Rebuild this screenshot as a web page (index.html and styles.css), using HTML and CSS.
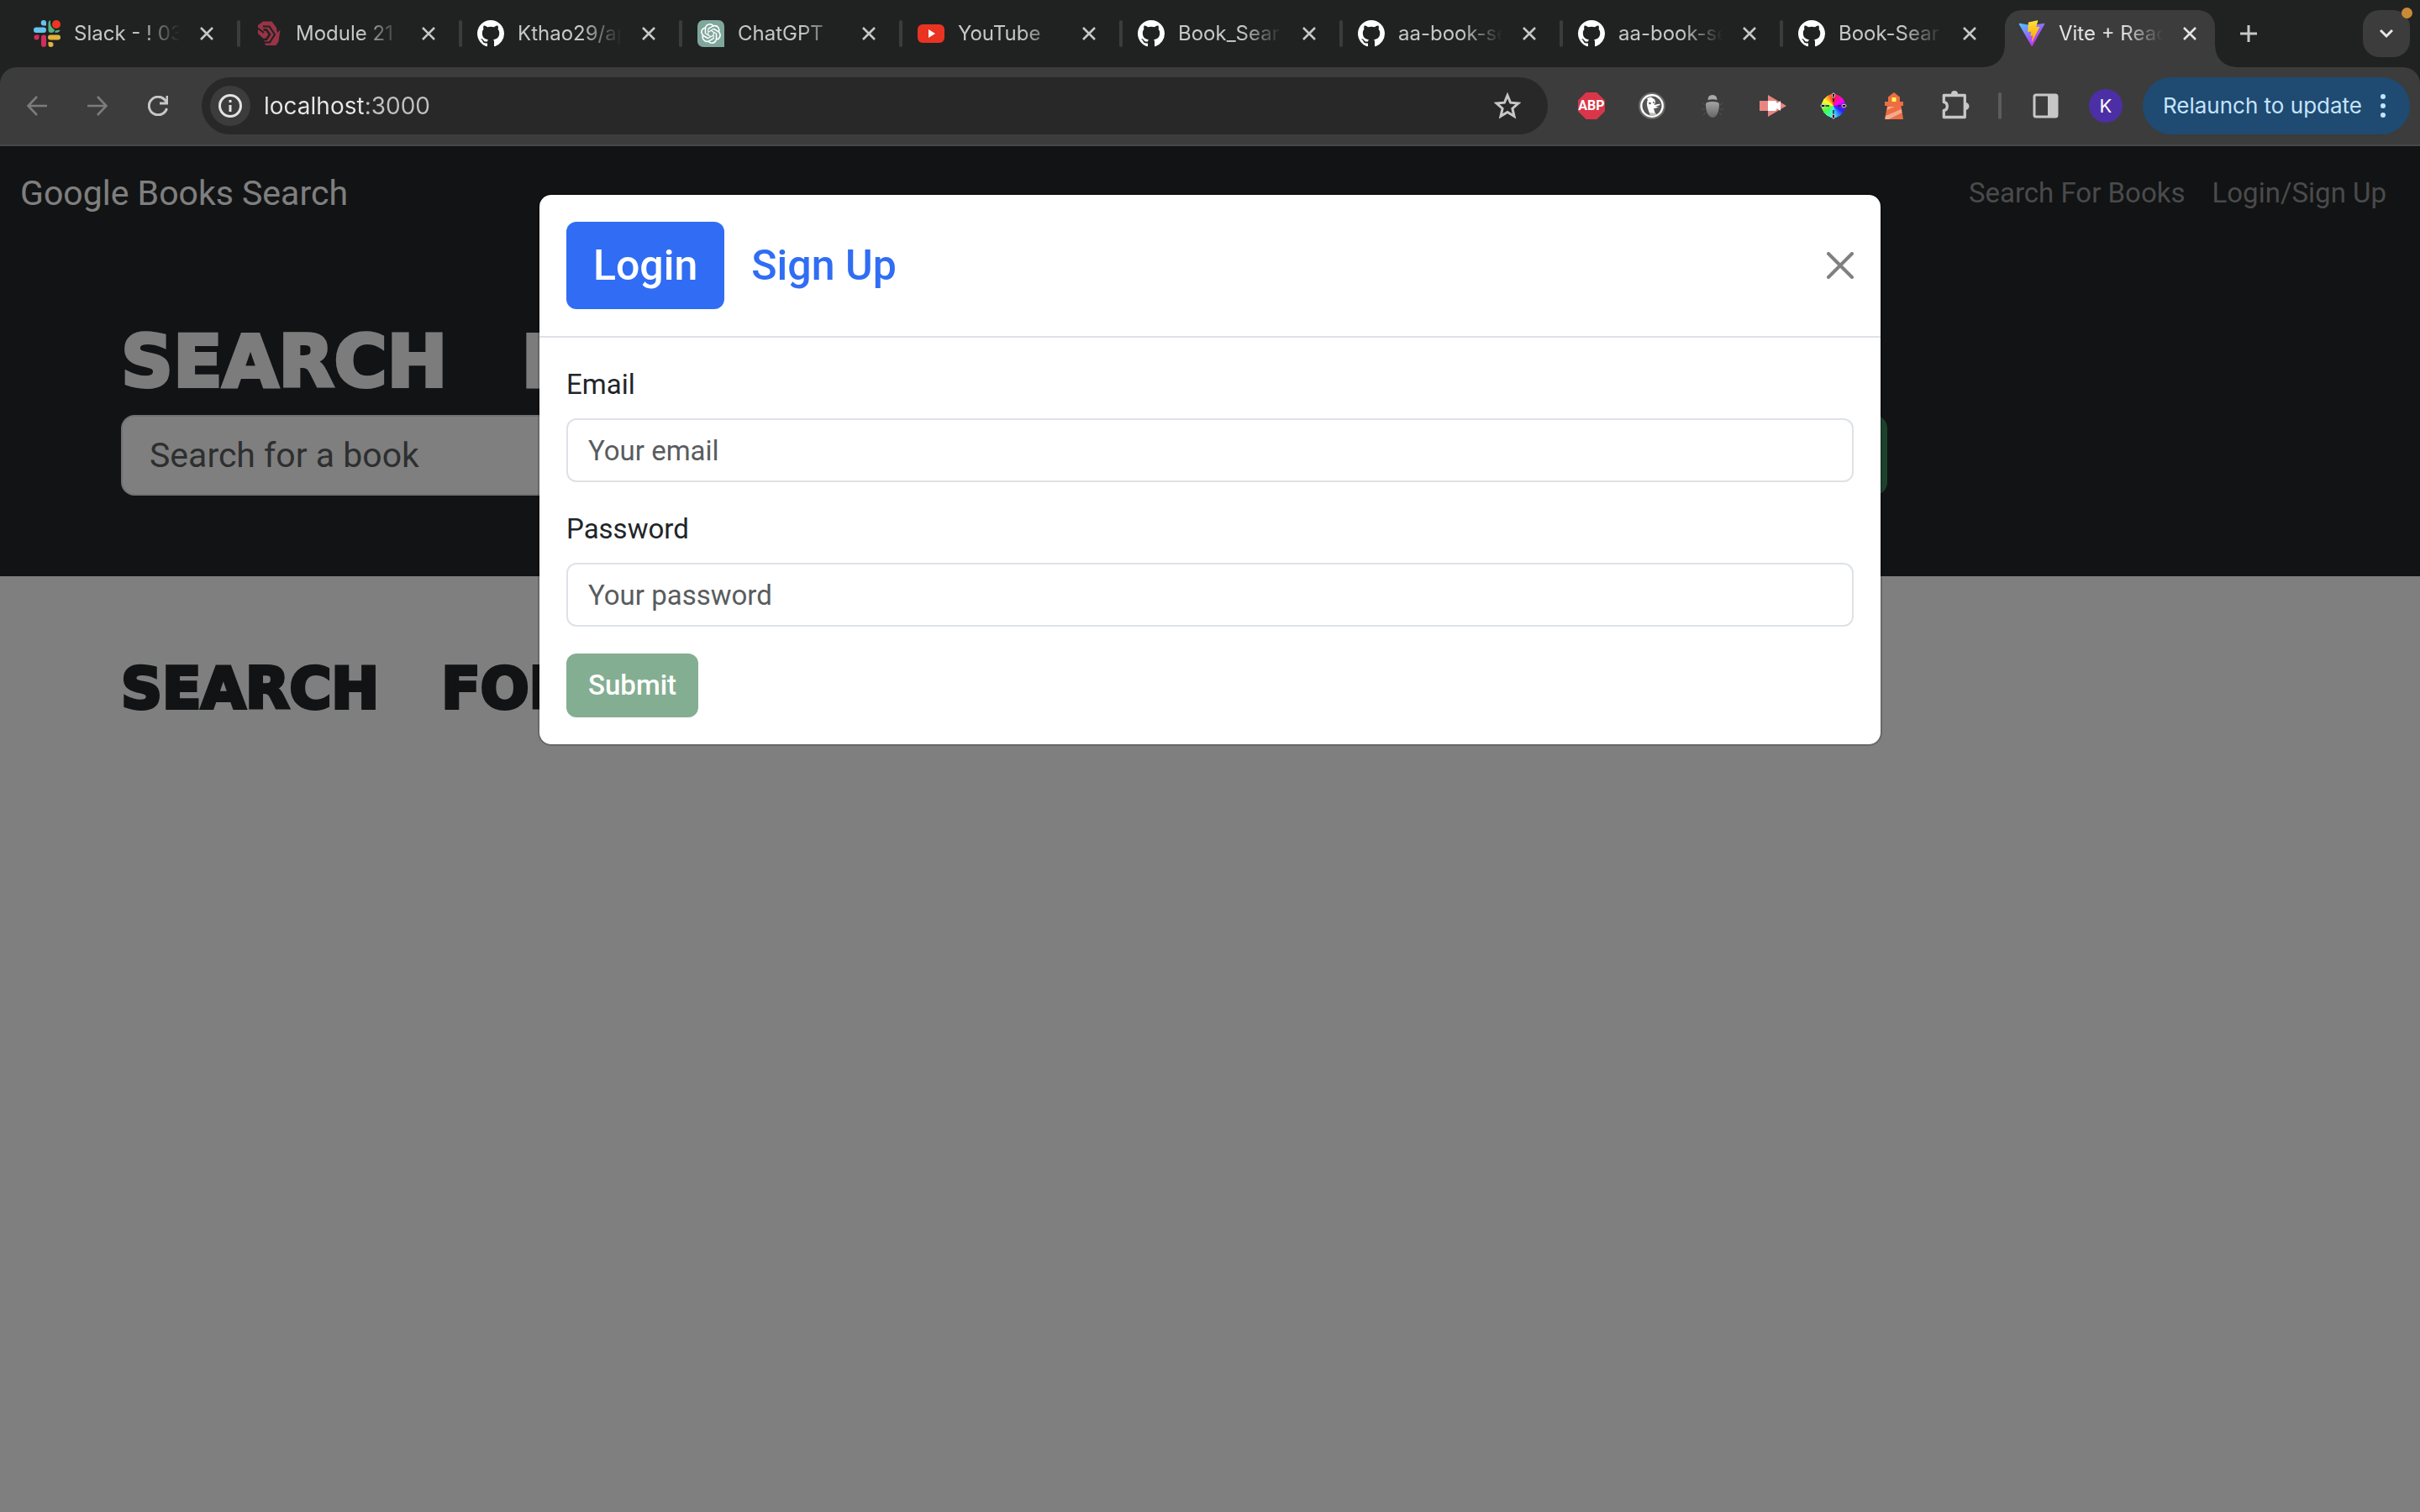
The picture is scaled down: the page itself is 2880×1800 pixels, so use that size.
FILE: index.html
```html
<!DOCTYPE html>
<html lang="en">
<head>
<meta charset="utf-8">
<title>Vite + React</title>
<link rel="stylesheet" href="styles.css">
</head>
<body>
<svg class="sprite" aria-hidden="true">
  <symbol id="github" viewBox="0 0 16 16"><path fill="#fff" d="M8 0C3.58 0 0 3.58 0 8c0 3.54 2.29 6.53 5.47 7.59.4.07.55-.17.55-.38 0-.19-.01-.82-.01-1.49-2.01.37-2.53-.49-2.69-.94-.09-.23-.48-.94-.82-1.13-.28-.15-.68-.52-.01-.53.63-.01 1.08.58 1.23.82.72 1.21 1.87.87 2.33.66.07-.52.28-.87.51-1.07-1.78-.2-3.64-.89-3.64-3.95 0-.87.31-1.59.82-2.15-.08-.2-.36-1.02.08-2.12 0 0 .67-.21 2.2.82.64-.18 1.32-.27 2-.27s1.36.09 2 .27c1.53-1.04 2.2-.82 2.2-.82.44 1.1.16 1.92.08 2.12.51.56.82 1.27.82 2.15 0 3.07-1.87 3.75-3.65 3.95.29.25.54.73.54 1.48 0 1.07-.01 1.93-.01 2.2 0 .21.15.46.55.38A8.01 8.01 0 0 0 16 8c0-4.42-3.58-8-8-8z"/></symbol>
  <symbol id="close" viewBox="0 0 16 16"><path fill="none" stroke="currentColor" stroke-width="2.6" d="M1 1l14 14M15 1L1 15"/></symbol>
</svg>

<header class="chrome">
  <div class="tabstrip">
    <div class="tabs">
      <div class="tab">
        <svg class="favicon" viewBox="0 0 32 32"><g fill="#67c3ef"><rect x="0" y="8.500" width="15" height="6.500" rx="3.200"/><path d="M12 0a3 3 0 0 1 3 3v3.500h-3a3 3 0 0 1 0-6.500z"/></g><g fill="#54b182"><path d="M17.500 3q0-2 2.500-3-1 8 5 11.500-.5 3.500-4 3.500a3.300 3.300 0 0 1-3.500-3z"/><path d="M25.500 15v-2.500l6-1q-.5 3.500-6 3.500z"/></g><g fill="#e0b23f"><rect x="17" y="17.500" width="15" height="6" rx="3"/><path d="M17.500 26h3a3 3 0 1 1-3 3z"/></g><g fill="#d02e5b"><rect x="9" y="17.500" width="6" height="14.500" rx="3"/><path d="M6.500 17.500v3a3 3 0 1 1-3.500-3z"/></g><circle cx="27" cy="5" r="5" fill="#ee3524"/></svg>
        <span class="tab-title">Slack - ! 03</span>
        <button class="tab-close" aria-label="Close tab"><svg viewBox="0 0 16 16"><use href="#close"/></svg></button>
      </div>
      <div class="tab">
        <svg class="favicon" viewBox="0 0 32 32"><path fill="#993347" d="M3 6l6-4.500h10.500l5.500 7.500 1 6 3.500-3.500-2 14-3 4.500H12l-2.500-8L3 16z"/><path fill="none" stroke="#202221" stroke-width="2" d="M2 9l8 6M9 7.500h7.500l6.500 9.500-6 9.500h-7.500"/><path fill="none" stroke="#202221" stroke-width="2.500" d="M9.500 11.500h3.500l4 5.500-4 6h-4"/></svg>
        <span class="tab-title">Module 21</span>
        <button class="tab-close" aria-label="Close tab"><svg viewBox="0 0 16 16"><use href="#close"/></svg></button>
      </div>
      <div class="tab">
        <svg class="favicon"><use href="#github"/></svg>
        <span class="tab-title">Kthao29/ap</span>
        <button class="tab-close" aria-label="Close tab"><svg viewBox="0 0 16 16"><use href="#close"/></svg></button>
      </div>
      <div class="tab">
        <svg class="favicon" viewBox="0 0 32 32"><path fill="#7fa79c" d="M7 0h18a7 7 0 0 1 7 7v25H7a7 7 0 0 1-7-7V7a7 7 0 0 1 7-7z"/><path fill="#fff" transform="translate(4 4)" d="M22.282 9.821a5.985 5.985 0 0 0-.516-4.910 6.046 6.046 0 0 0-6.510-2.900A6.065 6.065 0 0 0 4.981 4.182a5.985 5.985 0 0 0-3.998 2.900 6.046 6.046 0 0 0 .743 7.097 5.980 5.980 0 0 0 .511 4.911 6.051 6.051 0 0 0 6.515 2.900A5.985 5.985 0 0 0 13.260 24a6.056 6.056 0 0 0 5.772-4.206 5.989 5.989 0 0 0 3.998-2.900 6.056 6.056 0 0 0-.748-7.073zm-9.022 12.608a4.476 4.476 0 0 1-2.876-1.041l.142-.080 4.778-2.758a.795.795 0 0 0 .393-.681v-6.737l2.020 1.169a.071.071 0 0 1 .038.052v5.583a4.504 4.504 0 0 1-4.495 4.494zm-9.661-4.125a4.471 4.471 0 0 1-.535-3.014l.142.085 4.783 2.758a.771.771 0 0 0 .781 0l5.843-3.369v2.332a.080.080 0 0 1-.033.062L9.740 19.950a4.499 4.499 0 0 1-6.141-1.646zM2.341 7.896a4.485 4.485 0 0 1 2.366-1.973V11.600a.766.766 0 0 0 .388.677l5.814 3.354-2.020 1.169a.076.076 0 0 1-.071 0l-4.830-2.787A4.504 4.504 0 0 1 2.341 7.872zm16.596 3.856L13.104 8.364 15.119 7.200a.076.076 0 0 1 .071 0l4.830 2.791a4.494 4.494 0 0 1-.677 8.104v-5.677a.790.790 0 0 0-.407-.667zm2.011-3.023l-.142-.085-4.774-2.782a.776.776 0 0 0-.785 0L9.409 9.230V6.897a.066.066 0 0 1 .028-.062l4.830-2.787a4.499 4.499 0 0 1 6.680 4.660zM8.307 12.863l-2.020-1.164a.080.080 0 0 1-.038-.057V6.074a4.499 4.499 0 0 1 7.376-3.454l-.142.081L8.704 5.459a.795.795 0 0 0-.393.681zm1.098-2.365l2.602-1.500 2.607 1.500v2.999l-2.597 1.500-2.607-1.500Z"/></svg>
        <span class="tab-title">ChatGPT</span>
        <button class="tab-close" aria-label="Close tab"><svg viewBox="0 0 16 16"><use href="#close"/></svg></button>
      </div>
      <div class="tab">
        <svg class="favicon" viewBox="0 0 32 32"><rect y="5" width="32" height="22" rx="6" fill="#e93323"/><path fill="#fff" d="M13 11l8 5-8 5z"/></svg>
        <span class="tab-title">YouTube</span>
        <button class="tab-close" aria-label="Close tab"><svg viewBox="0 0 16 16"><use href="#close"/></svg></button>
      </div>
      <div class="tab">
        <svg class="favicon"><use href="#github"/></svg>
        <span class="tab-title">Book_Sear</span>
        <button class="tab-close" aria-label="Close tab"><svg viewBox="0 0 16 16"><use href="#close"/></svg></button>
      </div>
      <div class="tab">
        <svg class="favicon"><use href="#github"/></svg>
        <span class="tab-title">aa-book-se</span>
        <button class="tab-close" aria-label="Close tab"><svg viewBox="0 0 16 16"><use href="#close"/></svg></button>
      </div>
      <div class="tab">
        <svg class="favicon"><use href="#github"/></svg>
        <span class="tab-title">aa-book-se</span>
        <button class="tab-close" aria-label="Close tab"><svg viewBox="0 0 16 16"><use href="#close"/></svg></button>
      </div>
      <div class="tab tab-last">
        <svg class="favicon"><use href="#github"/></svg>
        <span class="tab-title">Book-Sear</span>
        <button class="tab-close" aria-label="Close tab"><svg viewBox="0 0 16 16"><use href="#close"/></svg></button>
      </div>
      <div class="tab tab-active">
        <svg class="favicon" viewBox="0 0 410 404"><defs><linearGradient id="vite-a" x1="6" y1="33" x2="235" y2="344" gradientUnits="userSpaceOnUse"><stop stop-color="#41d1ff"/><stop offset="1" stop-color="#bd34fe"/></linearGradient><linearGradient id="vite-b" x1="195" y1="9" x2="236" y2="293" gradientUnits="userSpaceOnUse"><stop stop-color="#ffea83"/><stop offset=".08" stop-color="#ffdd35"/><stop offset="1" stop-color="#ffa800"/></linearGradient></defs><path fill="url(#vite-a)" d="M399.600 59.500L215.600 388.500C211.800 395.300 202.100 395.400 198.200 388.600L10.600 59.600C6.400 52.200 12.700 43.300 21 44.800L205.200 77.700C206.400 77.900 207.600 77.900 208.800 77.700L389.100 44.800C397.400 43.300 403.800 52.100 399.600 59.500Z"/><path fill="url(#vite-b)" d="M293 1.600L156.800 28.300C154.600 28.700 152.900 30.600 152.800 32.900L144.400 174.300C144.200 177.700 147.300 180.200 150.500 179.500L188.400 170.700C192 169.900 195.200 173.100 194.400 176.600L183.200 231.800C182.400 235.500 185.900 238.700 189.500 237.600L212.900 230.400C216.600 229.300 220.100 232.500 219.300 236.200L201.400 322.900C200.300 328.300 207.500 331.200 210.500 326.600L212.500 323.500L323.500 102.100C325.300 98.400 322.100 94.100 318 94.900L279 102.500C275.300 103.200 272.200 99.700 273.300 96.200L298.700 7.900C299.800 4.300 296.600.9 293 1.600Z"/></svg>
        <span class="tab-title">Vite + Reac</span>
        <button class="tab-close" aria-label="Close tab"><svg viewBox="0 0 16 16"><use href="#close"/></svg></button>
      </div>
    </div>
    <button class="new-tab" aria-label="New tab"><svg viewBox="0 0 20 20"><path stroke="#c7c7c7" stroke-width="3" d="M10 0v20M0 10h20"/></svg></button>
    <button class="tab-search" aria-label="Search tabs"><svg viewBox="0 0 16 16"><path fill="none" stroke="#e8e8e8" stroke-width="3" d="M1 4l7 7 7-7"/></svg><span class="update-dot"></span></button>
  </div>

  <div class="toolbar">
    <div class="nav-buttons">
      <button aria-label="Back"><svg viewBox="0 0 24 24"><path fill="none" stroke="#7c7c7c" stroke-width="2.600" d="M24 12H2M12 1L1.500 12 12 23"/></svg></button>
      <button aria-label="Forward"><svg viewBox="0 0 24 24"><path fill="none" stroke="#7c7c7c" stroke-width="2.600" d="M0 12h22M12 1l10.500 11L12 23"/></svg></button>
      <button aria-label="Reload"><svg viewBox="0 0 24 24"><path fill="none" stroke="#c7c7c7" stroke-width="3" d="M22.500 15A10.800 10.800 0 1 1 20 4.600L22.500 8"/><path fill="none" stroke="#c7c7c7" stroke-width="3" d="M23 0v9h-9"/></svg></button>
    </div>
    <div class="omnibox">
      <button class="site-info" aria-label="View site information"><svg viewBox="0 0 28 28"><circle cx="14" cy="14" r="12.500" fill="none" stroke="#e3e3e3" stroke-width="3"/><path stroke="#e3e3e3" stroke-width="3" d="M14 13v8M14 7v3"/></svg></button>
      <input class="address" type="text" value="localhost:3000" aria-label="Address">
      <button class="star" aria-label="Bookmark this tab"><svg viewBox="0 0 32 32"><path fill="none" stroke="#c7c7c7" stroke-width="3" d="M16 3.500l3.600 8.700 9.400.800-7.100 6.200 2.100 9.200-8-4.900-8 4.900 2.100-9.200L3 13l9.400-.8z"/></svg></button>
    </div>
    <div class="extensions">
      <button class="abp" aria-label="Adblock Plus"><span>ABP</span></button>
      <button aria-label="DuckDuckGo"><svg viewBox="0 0 32 32"><circle cx="16" cy="16" r="16" fill="#6a6a6a"/><circle cx="16" cy="16" r="12.700" fill="#555" stroke="#fff" stroke-width="2.400"/><path fill="#fff" d="M10 7.500q4-3.500 7-.5 3 1 3 5l-1.500 3 7-1.500v1.500l-5.500 2 4 .5-4 1.500h-2l2 6.500q-3 2-6 1.500-4-9-4-13 0-4 1-5z"/><circle cx="13.500" cy="13" r="1.300" fill="#555"/><circle cx="18" cy="12" r="1" fill="#555"/><path fill="#b9c4b4" d="M13 24l8 1v1.500q-4 2-7 1z"/></svg></button>
      <button aria-label="Bug finder"><svg viewBox="0 0 32 32"><defs><linearGradient id="bug" x1="0" y1="0" x2="0" y2="1"><stop stop-color="#a4a4a4"/><stop offset="1" stop-color="#666"/></linearGradient></defs><path fill="#a9a9a9" d="M10.500 9q0-6 5.500-6t5.500 6q-5.500-1.500-11 0z"/><path fill="url(#bug)" d="M8 14q0-3 8-3t8 3c0 9-3 16-8 16S8 23 8 14z"/><path fill="none" stroke="#555" d="M7 15l-3-2M7 20H3M8 24l-3 3M25 15l3-2M25 20h4M24 24l3 3"/></svg></button>
      <button aria-label="Video recorder"><svg viewBox="0 0 32 32"><path fill="#e98581" d="M0 10h10V3l22 13-22 13v-7H0z"/><path fill="#fff" d="M10 10h9l2 3 4-3v12l-4-3-2 3h-9z"/></svg></button>
      <button aria-label="Color picker"><span class="wheel"><svg viewBox="0 0 32 32"><path stroke="#222" stroke-width="1.500" d="M16 5v6M16 21v6M5 16h6M21 16h6"/><g fill="#111" stroke="#ddd"><rect x="14.500" y="1" width="3" height="5" rx="1.500"/><rect x="14.500" y="26" width="3" height="5" rx="1.500"/><rect x="1" y="14.500" width="5" height="3" rx="1.500"/><rect x="26" y="14.500" width="5" height="3" rx="1.500"/></g></svg></span></button>
      <button aria-label="Lighthouse"><svg viewBox="0 0 32 32"><path fill="#ec6e42" d="M9 5.500L16 0l7 5.500V11h4v5h-2.500L27 32H5l3-16H5v-5h4z"/><path fill="#fbfb4f" d="M13.500 6h5v5h-5z"/><path fill="#f3aa8e" d="M8.500 17H17l-9.500 4zM24.500 20l1 4L10 32H5.500l.5-4z"/></svg></button>
      <button class="puzzle" aria-label="Extensions"><svg viewBox="0 0 32 32"><path fill="none" stroke="#c7c7c7" stroke-width="3.300" stroke-linejoin="round" d="M3.300 3.500h25v26h-25v-8q4-.5 4-5t-4-5z"/><path fill="#c7c7c7" d="M12 2a4 4 0 0 1 8 0zM29 12a4.500 4.500 0 0 1 0 9z"/></svg></button>
    </div>
    <span class="divider"></span>
    <button class="side-panel" aria-label="Side panel"><svg viewBox="0 0 32 32"><rect x="3" y="3" width="27" height="26" rx="2" fill="none" stroke="#c7c7c7" stroke-width="3"/><path fill="#c7c7c7" d="M19 3h11v26H19z"/></svg></button>
    <button class="avatar" aria-label="Profile">K</button>
    <button class="relaunch"><span>Relaunch to update</span><svg viewBox="0 0 6 32"><g fill="#c4e4fb"><circle cx="3" cy="5" r="3"/><circle cx="3" cy="16" r="3"/><circle cx="3" cy="27" r="3"/></g></svg></button>
  </div>
</header>

<div class="viewport">
  <nav class="navbar">
    <a class="brand" href="#">Google Books Search</a>
    <a class="nav-link" href="#">Search For Books</a>
    <a class="nav-link" href="#">Login/Sign Up</a>
  </nav>
  <section class="hero">
    <div class="container">
      <h1><span>SEARCH</span> <span>FOR</span> <span>BOOKS!</span></h1>
      <form class="search-row">
        <input class="search-input" type="text" placeholder="Search for a book" aria-label="Search for a book">
        <button class="search-button" type="button">Submit Search</button>
      </form>
    </div>
  </section>
  <main class="container results">
    <h2><span>SEARCH</span> <span>FOR</span> <span>A</span> <span>BOOK</span></h2>
  </main>

  <div class="backdrop">
    <div class="modal" role="dialog" aria-label="Login">
      <div class="modal-header">
        <div class="pills">
          <button class="pill pill-active">Login</button>
          <button class="pill">Sign Up</button>
        </div>
        <button class="modal-close" aria-label="Close"><svg viewBox="0 0 32 32"><path stroke="#808080" stroke-width="4" stroke-linecap="round" d="M2 2l28 28M30 2L2 30"/></svg></button>
      </div>
      <form class="modal-body">
        <div class="field">
          <label for="email">Email</label>
          <input id="email" type="text" placeholder="Your email">
        </div>
        <div class="field">
          <label for="password">Password</label>
          <input id="password" type="password" placeholder="Your password">
        </div>
        <button class="submit" type="submit" disabled>Submit</button>
      </form>
    </div>
  </div>
</div>
</body>
</html>
```
FILE: styles.css
```css
* { box-sizing: border-box; }

body {
  margin: 0;
  min-height: 100vh;
  display: flex;
  flex-direction: column;
  font-family: Roboto, sans-serif;
  font-size: 33px;
  line-height: 48px;
  color: #212529;
  background: #fff;
}

button, input { font: inherit; margin: 0; }
button { border: 0; padding: 0; background: none; color: inherit; }
svg { display: block; }
.sprite { position: absolute; width: 0; height: 0; }

/* browser chrome */
.chrome { background: #202221; font-family: Inter, sans-serif; }

.tabstrip { display: flex; align-items: center; height: 80px; padding: 12px 12px 0 24px; }
.tabs { flex: 1; display: flex; gap: 12px; align-self: stretch; }

.tab {
  position: relative;
  flex: 1 1 248px;
  min-width: 0;
  display: flex;
  align-items: center;
  padding: 0 14px 12px 16px;
  font-size: 24px;
  line-height: 32px;
  color: #c7c7c7;
}
.tab:nth-child(-n+2) { flex-basis: 250px; }
.tab:not(.tab-active):not(.tab-last)::after {
  content: "";
  position: absolute;
  right: -10px;
  top: 12px;
  width: 4px;
  height: 32px;
  border-radius: 2px;
  background: #3c3c3c;
}
.favicon { flex: none; width: 32px; height: 32px; margin-right: 16px; }
.tab-title {
  flex: 1;
  min-width: 0;
  overflow: hidden;
  white-space: nowrap;
  -webkit-mask-image: linear-gradient(to left, transparent, #000 48px);
  mask-image: linear-gradient(to left, transparent, #000 48px);
}
.tab-close { flex: none; width: 32px; height: 32px; margin-left: 16px; padding: 8px; }
.tab-close svg { width: 16px; height: 16px; }

.tab-active { background: #3c3c3c; border-radius: 20px 20px 0 0; color: #e3e3e3; }
.tab-active::before,
.tab-active::after {
  content: "";
  position: absolute;
  bottom: 0;
  width: 24px;
  height: 24px;
}
.tab-active::before { left: -24px; background: radial-gradient(circle at 0 0, transparent 23px, #3c3c3c 24px); }
.tab-active::after { right: -24px; background: radial-gradient(circle at 100% 0, transparent 23px, #3c3c3c 24px); }

.new-tab { width: 80px; height: 56px; padding: 18px 30px; margin: 0 96px 12px 0; }
.new-tab svg { width: 20px; height: 20px; }
.tab-search { position: relative; width: 56px; height: 56px; margin-bottom: 12px; padding: 20px; border-radius: 20px; background: #3c3c3c; }
.tab-search svg { width: 16px; height: 16px; }
.update-dot { position: absolute; top: -3px; right: -3px; width: 13px; height: 13px; border-radius: 50%; background: #c98a37; }

.toolbar {
  display: flex;
  align-items: center;
  height: 94px;
  padding: 0 12px 0 24px;
  border-bottom: 2px solid #464a48;
  border-radius: 20px 20px 0 0;
  background: #3c3c3c;
}
.nav-buttons { display: flex; gap: 32px; width: 216px; }
.nav-buttons button { width: 40px; padding: 8px; }
.nav-buttons svg { width: 24px; height: 24px; }

.omnibox { flex: 1; display: flex; align-items: center; height: 68px; padding: 0 32px 0 10px; border-radius: 34px; background: #282828; }
.site-info { width: 48px; height: 48px; padding: 10px; border-radius: 50%; background: #3c3c3c; }
.site-info svg { width: 28px; height: 28px; }
.address {
  flex: 1;
  height: 48px;
  margin-left: 16px;
  padding: 0;
  border: 0;
  font-size: 28px;
  color: transparent;
  background: linear-gradient(to right, #e8e8e8 118px, #c0c0c0 118px);
  -webkit-background-clip: text;
  background-clip: text;
}
.star svg { width: 32px; height: 32px; }

.extensions { display: flex; gap: 40px; margin-left: 36px; }
.extensions button { width: 32px; height: 32px; }
.extensions svg { width: 32px; height: 32px; }
.extensions .puzzle svg { overflow: visible; }
.extensions .abp {
  font: 700 16px/32px Roboto, sans-serif;
  color: #fff;
  background: #d9364a;
  clip-path: polygon(30% 0, 70% 0, 100% 30%, 100% 70%, 70% 100%, 30% 100%, 0 70%, 0 30%);
}
.wheel {
  display: block;
  background: radial-gradient(circle, transparent 14px, #3c3c3c 14px), conic-gradient(#f22, #f0f 60deg, #22f 120deg, #4ef 180deg, #4f4 240deg, #ff3 300deg, #f22);
}
.divider { width: 4px; height: 32px; margin: 0 36px 0 36px; border-radius: 2px; background: #5c5c5c; }
.side-panel svg { width: 32px; height: 32px; }
.avatar { width: 40px; height: 40px; margin: 0 24px 0 36px; border-radius: 50%; background: #4c2fa4; color: #fff; font-size: 22px; line-height: 40px; }
.relaunch { display: flex; align-items: center; gap: 22px; height: 68px; padding: 0 29px 0 24px; border-radius: 34px; background: #1f4a72; color: #c4e4fb; font-size: 26px; }
.relaunch svg { width: 6px; height: 32px; }

/* page */
.viewport { position: relative; flex: 1; }
.navbar { display: flex; align-items: center; height: 112px; padding: 0 24px; background: #242629; }
.brand { margin-right: auto; font-size: 41px; color: #fff; text-decoration: none; }
.nav-link { padding: 0 16px; color: #949596; text-decoration: none; }

.hero { padding: 96px 0; background: #242629; }
.container { max-width: 2640px; margin: 0 auto; padding: 0 24px; }
h1, h2 { display: flex; margin: 0 0 16px; font-family: "DejaVu Sans", sans-serif; font-weight: 700; -webkit-text-stroke: 4px; }
h1 { gap: 88px; font-size: 86px; line-height: 96px; color: #f8f9fa; }
h2 { gap: 74px; font-size: 68px; line-height: 76px; color: #242629; }
.search-row { display: flex; gap: 48px; }
.search-input { width: 1712px; height: 96px; padding: 0 32px; border: 2px solid #dee2e6; border-radius: 16px; font-size: 41px; background: #fff; }
.search-input::placeholder { color: #5b5e61; opacity: 1; }
.search-button { width: 342px; height: 96px; border-radius: 16px; font-size: 41px; color: #fff; background: #38855a; }
.results { padding-top: 96px; }

/* login dialog */
.backdrop { position: absolute; inset: 0; padding-top: 56px; background: rgba(0, 0, 0, .5); }
.modal { max-width: 1600px; margin: 0 auto; border: 2px solid rgba(0, 0, 0, .175); border-radius: 16px; background: #fff; background-clip: padding-box; }
.modal-header { display: flex; align-items: center; justify-content: space-between; padding: 32px; border-bottom: 2px solid #dee2e6; }
.pills { display: flex; }
.pill { padding: 16px 32px; border-radius: 12px; font-size: 50px; font-weight: 500; line-height: 72px; color: #316df4; }
.pill-active { color: #fff; background: #316df4; }
.modal-close svg { width: 32px; height: 32px; }
.modal-body { padding: 32px; }
.field { display: flex; flex-direction: column; gap: 16px; margin-bottom: 32px; }
.field input { height: 76px; padding: 0 24px; border: 2px solid #dee2e6; border-radius: 12px; background: #fff; }
.field input::placeholder { color: #595c5f; opacity: 1; }
.submit { display: block; height: 76px; padding: 0 26px; border-radius: 12px; font-weight: 500; color: #fff; background: #84ae92; }
```
